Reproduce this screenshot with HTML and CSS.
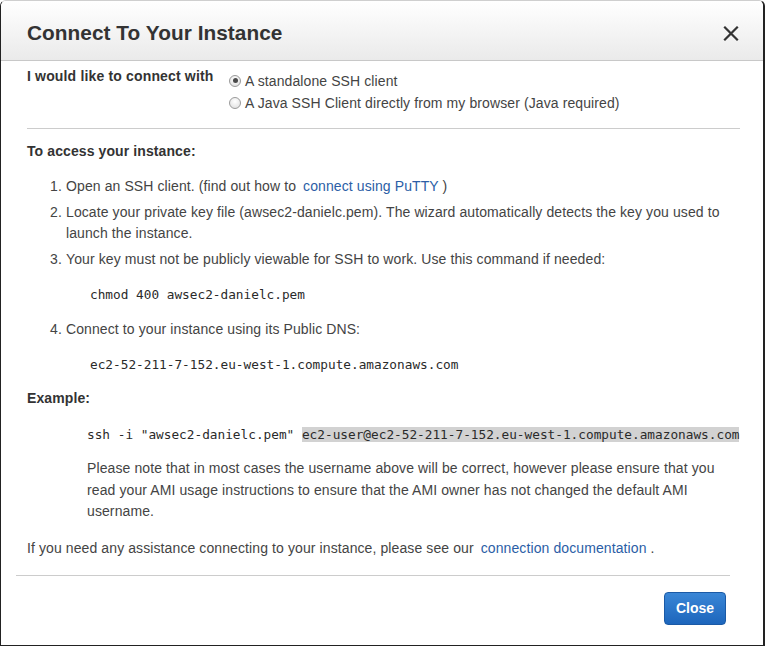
FILE: index.html
```html
<!DOCTYPE html>
<html>
<head>
<meta charset="utf-8">
<title>Connect To Your Instance</title>
<link rel="stylesheet" href="styles.css">
</head>
<body>
<div class="dialog">
  <div class="header">
    <h1 class="title">Connect To Your Instance</h1>
    <span class="close-x" aria-label="Close">
      <svg width="16" height="15" viewBox="0 0 16 15"><path d="M2 1.5 L14 13.5 M14 1.5 L2 13.5" stroke="#333" stroke-width="2.2" stroke-linecap="square"/></svg>
    </span>
  </div>
  <div class="content">
    <div class="connect-row">
      <div class="connect-label">I would like to connect with</div>
      <div class="options">
        <div class="option"><span class="radio checked"></span>A standalone SSH client</div>
        <div class="option"><span class="radio"></span>A Java SSH Client directly from my browser (Java required)</div>
      </div>
    </div>
    <div class="rule"></div>
    <div class="section-title">To access your instance:</div>
    <ol class="steps">
      <li class="step"><span class="num">1.</span><span class="txt">Open an SSH client. (find out how to <a class="link lead" href="#">connect using PuTTY</a> )</span></li>
      <li class="step"><span class="num">2.</span><span class="txt">Locate your private key file (awsec2-danielc.pem). The wizard automatically detects the key you used to launch the instance.</span></li>
      <li class="step"><span class="num">3.</span><span class="txt">Your key must not be publicly viewable for SSH to work. Use this command if needed:</span></li>
      <li class="code step-code">chmod 400 awsec2-danielc.pem</li>
      <li class="step"><span class="num">4.</span><span class="txt">Connect to your instance using its Public DNS:</span></li>
      <li class="code step-code dns">ec2-52-211-7-152.eu-west-1.compute.amazonaws.com</li>
    </ol>
    <div class="section-title example-title">Example:</div>
    <div class="example">
      <div class="code ssh">ssh -i "awsec2-danielc.pem" <span class="hl">ec2-user@ec2-52-211-7-152.eu-west-1.compute.amazonaws.com</span></div>
      <p class="note">Please note that in most cases the username above will be correct, however please ensure that you read your AMI usage instructions to ensure that the AMI owner has not changed the default AMI username.</p>
    </div>
    <p class="help">If you need any assistance connecting to your instance, please see our <a class="link lead" href="#">connection documentation</a> .</p>
  </div>
  <div class="footer">
    <button class="btn-close">Close</button>
  </div>
</div>
</body>
</html>
```
FILE: styles.css
```css
html, body {
  margin: 0;
  padding: 0;
  background: #ffffff;
}
body {
  font-family: "Liberation Sans", Arial, sans-serif;
  font-size: 14px;
  letter-spacing: 0.1px;
  color: #444;
}
.dialog {
  box-sizing: border-box;
  width: 765px;
  height: 646px;
  border: 1px solid #222;
  border-right-width: 2px;
  border-top-color: #cfcfcf;
  border-radius: 6px 6px 0 0;
  background: #fff;
  display: flex;
  flex-direction: column;
  overflow: hidden;
}
.header {
  box-sizing: border-box;
  height: 60px;
  flex: none;
  background: linear-gradient(#ffffff, #eaeaea);
  border-bottom: 1px solid #c8c8c8;
  display: flex;
  align-items: center;
  justify-content: space-between;
  padding: 0 24px 0 26px;
}
.title {
  margin: 0;
  font-size: 20.8px;
  letter-spacing: 0.05px;
  font-weight: bold;
  color: #333;
  line-height: 24px;
  padding-top: 4px;
}
.close-x {
  display: flex;
  width: 16px;
  height: 15px;
  margin-top: 6px;
}
.content {
  padding: 0 23px 0 26px;
  flex: none;
}
.connect-row {
  display: flex;
  padding-top: 5px;
}
.connect-label {
  font-weight: bold;
  font-size: 14px;
  letter-spacing: 0.16px;
  color: #333;
  line-height: 21px;
  width: 202px;
}
.options {
  padding-top: 4px;
}
.option {
  display: flex;
  align-items: center;
  line-height: 22px;
  height: 22px;
}
.radio {
  box-sizing: border-box;
  width: 12px;
  height: 12px;
  border-radius: 50%;
  border: 1px solid #9a9a9a;
  background: radial-gradient(circle at 50% 35%, #ffffff, #dcdcdc);
  margin-right: 4px;
  margin-top: -1px;
  position: relative;
}
.radio.checked::after {
  content: "";
  position: absolute;
  left: 2.5px;
  top: 2.5px;
  width: 5px;
  height: 5px;
  border-radius: 50%;
  background: #4a4a4a;
}
.rule {
  height: 1px;
  background: #cccccc;
  margin-top: 14px;
}
.section-title {
  font-weight: bold;
  color: #333;
  line-height: 21px;
  margin-top: 12px;
}
.steps {
  list-style: none;
  margin: 14px 0 0 0;
  padding: 0 0 0 23px;
}
.step {
  display: flex;
  line-height: 21px;
  margin-bottom: 5px;
}
.num {
  width: 16px;
  flex: none;
}
.txt {
  flex: 1;
}
.code {
  font-family: "DejaVu Sans Mono", "Liberation Mono", monospace;
  font-size: 12.75px;
  letter-spacing: 0;
  color: #2a2a2a;
  line-height: 21px;
}
.step-code {
  padding-left: 40px;
  margin-top: 14px;
  margin-bottom: 14px;
}
.step-code.dns {
  margin-top: 14px;
  margin-bottom: 0;
}
.example-title {
  margin-top: 13px;
}
.example {
  padding-left: 60px;
}
.ssh {
  margin-top: 15px;
  white-space: nowrap;
}
.hl {
  background: #d2d2d2;
}
.note {
  margin: 13px 0 0 0;
  line-height: 21.5px;
}
.help {
  margin: 15px 0 0 0;
  line-height: 21px;
}
.link {
  color: #2b5ea6;
  text-decoration: none;
}
.link.lead {
  margin-left: 3px;
}
.footer {
  margin: 16px 33px 0 15px;
  border-top: 1px solid #cccccc;
  display: flex;
  justify-content: flex-end;
  padding-top: 16px;
  padding-right: 4px;
}
.btn-close {
  box-sizing: border-box;
  width: 62px;
  height: 33px;
  border: 1px solid #1b5aa6;
  border-radius: 4px;
  background: linear-gradient(#3a86d6, #1d66bc);
  color: #fff;
  font-family: "Liberation Sans", Arial, sans-serif;
  font-weight: bold;
  font-size: 14px;
  padding: 0;
}
```
